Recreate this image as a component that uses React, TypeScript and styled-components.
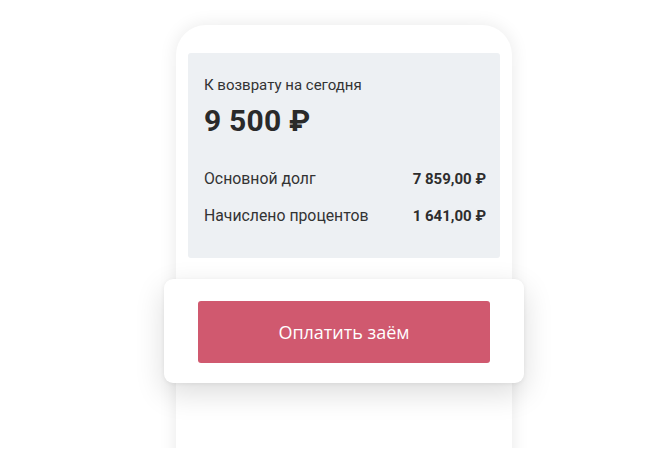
import React from "react";
import styled, { createGlobalStyle } from "styled-components";

const Global = createGlobalStyle`
  html, body { margin: 0; padding: 0; background: #ffffff; }
  body { font-family: Roboto, "Liberation Sans", sans-serif; }
`;

const Stage = styled.div`
  height: 448px;
  overflow: hidden;
  padding: 25px 0 0 176px;
  box-sizing: border-box;
`;

const Phone = styled.div`
  width: 336px;
  min-height: 520px;
  box-sizing: border-box;
  padding: 28px 12px 0;
  background: #ffffff;
  border-radius: 30px;
  box-shadow: 0 0 18px rgba(0, 0, 0, 0.09);
  display: flex;
  flex-direction: column;
`;

const Summary = styled.section`
  background: #edf0f3;
  border-radius: 3px;
  height: 205px;
  box-sizing: border-box;
  padding: 22px 14px 0 16px;
  display: flex;
  flex-direction: column;
  color: #2d2d2d;
`;

const Caption = styled.div`
  font-size: 15px;
  line-height: 20px;
  color: #333;
`;

const Total = styled.div`
  font-size: 30px;
  font-weight: 700;
  line-height: 36px;
  margin-top: 8px;
  color: #2a2a2a;
  letter-spacing: 0.2px;
`;

const Rows = styled.div`
  margin-top: 30px;
  display: flex;
  flex-direction: column;
  gap: 17px;
`;

const Row = styled.div`
  display: flex;
  justify-content: space-between;
  align-items: baseline;
  line-height: 20px;
`;

const Label = styled.span`
  font-size: 15.8px;
  color: #333;
`;

const Value = styled.span`
  font-size: 15px;
  font-weight: 700;
  color: #2d2d2d;
`;

const ActionCard = styled.div`
  margin: 21px -24px 0;
  height: 104px;
  box-sizing: border-box;
  padding: 22px 34px 0;
  background: #ffffff;
  border-radius: 9px;
  box-shadow: 0 10px 30px rgba(0, 0, 0, 0.14), 0 1px 4px rgba(0, 0, 0, 0.06);
`;

const PayButton = styled.button`
  width: 100%;
  height: 62px;
  border: none;
  border-radius: 3px;
  background: #d0596f;
  color: #ffffff;
  font-family: "Open Sans", "Noto Sans", sans-serif;
  font-size: 18px;
  font-weight: 500;
  cursor: pointer;
  padding: 0;
`;

export default function App() {
  return (
    <>
      <Global />
      <Stage>
        <Phone>
          <Summary>
            <Caption>К возврату на сегодня</Caption>
            <Total>9 500 ₽</Total>
            <Rows>
              <Row>
                <Label>Основной долг</Label>
                <Value>7 859,00 ₽</Value>
              </Row>
              <Row>
                <Label>Начислено процентов</Label>
                <Value>1 641,00 ₽</Value>
              </Row>
            </Rows>
          </Summary>
          <ActionCard>
            <PayButton>Оплатить заём</PayButton>
          </ActionCard>
        </Phone>
      </Stage>
    </>
  );
}
